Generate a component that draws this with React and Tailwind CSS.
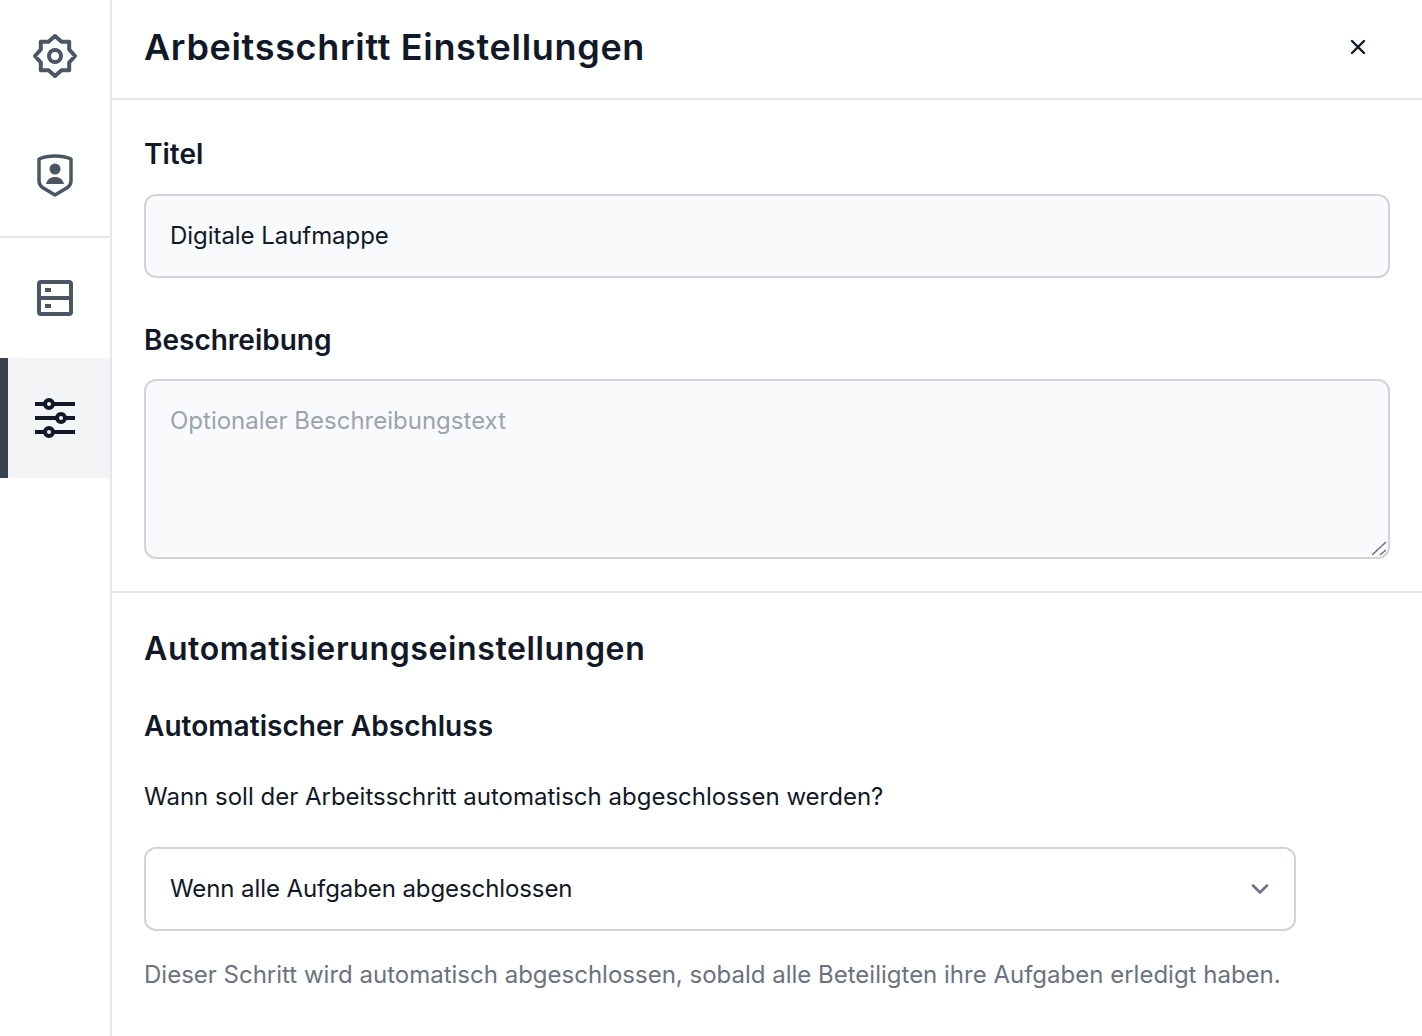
import React from "react";

const Gear = () => (
  <svg width="48" height="48" viewBox="0 0 48 48" fill="none" stroke="#4b5563" strokeWidth="4" strokeLinejoin="round">
    <path d="M24 4 L30.500 9.800 L38.200 9.800 L38.200 17.500 L44 24 L38.200 30.500 L38.200 38.200 L30.500 38.200 L24 44 L17.500 38.200 L9.800 38.200 L9.800 30.500 L4 24 L9.800 17.500 L9.800 9.800 L17.500 9.800 Z" />
    <circle cx="24" cy="24" r="6" />
  </svg>
);
const Shield = () => (
  <svg width="48" height="48" viewBox="0 0 48 48" fill="none">
    <path d="M24 4 C29 4 35 4.800 40 7 V29 C40 32 38.500 34 36.500 35.500 L24 43 L11.500 35.500 C9.500 34 8 32 8 29 V7 C13 4.800 19 4 24 4 Z" stroke="#4b5563" strokeWidth="3.500" strokeLinejoin="round" />
    <circle cx="24" cy="17" r="5.500" fill="#4b5563" />
    <path d="M15 32 C16 27.500 19.500 25 24 25 C28.500 25 32 27.500 33 32 Z" fill="#4b5563" />
  </svg>
);
const Server = () => (
  <svg width="48" height="48" viewBox="0 0 48 48" fill="none">
    <rect x="8" y="8" width="32" height="32" rx="2" stroke="#4b5563" strokeWidth="4" />
    <path d="M8 24 H40" stroke="#4b5563" strokeWidth="4" />
    <path d="M14 16 H20 M14 32 H20" stroke="#4b5563" strokeWidth="4" />
  </svg>
);
const Sliders = () => (
  <svg width="48" height="48" viewBox="0 0 48 48" fill="none" stroke="#111827" strokeWidth="4">
    <path d="M4 10 H14 M22 10 H44 M4 24 H26 M34 24 H44 M4 38 H14 M22 38 H44" />
    <circle cx="18" cy="10" r="4" />
    <circle cx="30" cy="24" r="4" />
    <circle cx="18" cy="38" r="4" />
  </svg>
);

export default function App() {
  return (
    <div className="flex h-[1036px] w-[1422px] overflow-hidden bg-white text-[#111827] font-['Inter',sans-serif]">
      <aside className="flex w-[112px] shrink-0 flex-col border-r-2 border-[#e5e7eb]">
        <div className="flex h-[112px] items-center justify-center"><Gear /></div>
        <div className="flex h-[126px] items-center justify-center border-b-2 border-[#e5e7eb] pt-1"><Shield /></div>
        <div className="flex h-[120px] items-center justify-center"><Server /></div>
        <div className="relative flex h-[120px] items-center justify-center bg-[#f3f4f6]">
          <div className="absolute inset-y-0 left-0 w-2 bg-[#374151]" />
          <Sliders />
        </div>
      </aside>
      <main className="flex min-w-0 flex-1 flex-col">
        <header className="flex h-[100px] shrink-0 items-center justify-between border-b-2 border-[#e5e7eb] pl-8 pr-[54px] pb-1">
          <h1 className="text-[36px] font-semibold leading-[40px] tracking-[0.68px]">Arbeitsschritt Einstellungen</h1>
          <svg width="20" height="20" viewBox="0 0 20 20" fill="none" stroke="#111827" strokeWidth="2.400" strokeLinecap="round"><path d="M4 4 L16 16 M16 4 L4 16" /></svg>
        </header>
        <section className="border-b-2 border-[#e5e7eb] px-8 pb-8">
          <label className="mt-[38px] block text-[28px] font-semibold leading-8">Titel</label>
          <div className="mt-6 flex h-[84px] w-full items-center rounded-xl border-2 border-[#d1d5db] bg-[#f9fafb] px-6 text-[24px] tracking-[-0.05px]">Digitale Laufmappe</div>
          <label className="mt-[46px] block text-[28px] font-semibold leading-8">Beschreibung</label>
          <div className="relative mt-[23px] h-[180px]">
            <textarea readOnly placeholder="Optionaler Beschreibungstext" className="block h-full w-full resize-none rounded-xl border-2 border-[#d1d5db] bg-[#f9fafb] px-6 pt-6 text-[24px] leading-8 outline-none placeholder:text-[#9ca3af]" />
            <svg className="absolute bottom-[3px] right-[2px]" width="16" height="16" viewBox="0 0 16 16" fill="none" stroke="#6b7280" strokeWidth="1.500"><path d="M0 15 L14 2 M8 15 L14 10" /></svg>
          </div>
        </section>
        <section className="px-8">
          <h2 className="mt-[36px] text-[32px] font-semibold leading-10 tracking-[0.62px]">Automatisierungseinstellungen</h2>
          <h3 className="mt-[41px] text-[28px] font-semibold leading-8 tracking-[0.04px]">Automatischer Abschluss</h3>
          <p className="mt-[39px] text-[24px] leading-8">Wann soll der Arbeitsschritt automatisch abgeschlossen werden?</p>
          <div className="mt-[34px] flex h-[84px] w-[1152px] items-center justify-between rounded-xl border-2 border-[#d1d5db] bg-white pl-6 pr-[22px]">
            <span className="text-[24px] tracking-[-0.09px]">Wenn alle Aufgaben abgeschlossen</span>
            <svg width="24" height="24" viewBox="0 0 24 24" fill="none" stroke="#6b7280" strokeWidth="2.500" strokeLinecap="round" strokeLinejoin="round"><path d="M5 8.500 L12 15.500 L19 8.500" /></svg>
          </div>
          <p className="mt-7 text-[24px] leading-8 text-[#6b7280]">Dieser Schritt wird automatisch abgeschlossen, sobald alle Beteiligten ihre Aufgaben erledigt haben.</p>
        </section>
      </main>
    </div>
  );
}
